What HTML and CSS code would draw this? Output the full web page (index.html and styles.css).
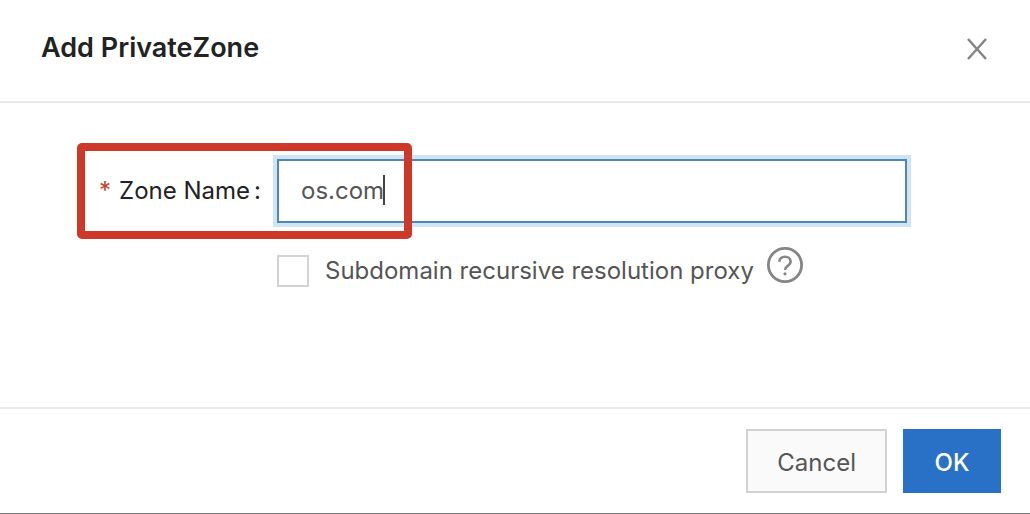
FILE: index.html
```html
<!DOCTYPE html>
<html lang="en">
<head>
<meta charset="utf-8">
<title>Add PrivateZone</title>
<link rel="stylesheet" href="styles.css">
</head>
<body>
<form class="dialog" role="dialog" aria-labelledby="dialog-title">
  <header class="dialog-header">
    <h1 class="dialog-title" id="dialog-title">Add PrivateZone</h1>
    <button class="close" type="button" aria-label="Close">
      <svg width="20" height="22" viewBox="0 0 20 22" fill="none" stroke="#858585" stroke-width="2.5"><path d="M1 1 19 21M19 1 1 21"/></svg>
    </button>
  </header>
  <main class="dialog-body">
    <div class="field">
      <label class="field-label" for="zone"><span class="required">*</span><span>Zone Name</span><span class="colon">:</span></label>
      <div class="input-wrap">
        <input class="input" id="zone" type="text" value="os.com" autocomplete="off" spellcheck="false">
        <span class="caret"></span>
      </div>
      <div class="highlight"></div>
    </div>
    <div class="option">
      <input class="checkbox" id="proxy" type="checkbox">
      <label class="option-label" for="proxy">Subdomain recursive resolution proxy</label>
      <button class="help" type="button" aria-label="Help">
        <svg width="36" height="36" viewBox="0 0 36 36" fill="none" stroke="#858585"><circle cx="18" cy="18" r="16.6" stroke-width="2.8"/><path d="M12.4 14.8C12.4 11.6 14.8 9.8 18 9.8s5.6 1.8 5.6 4.7c0 2.4-1.6 3.5-3.2 4.6-1.600 1.100-2.400 1.800-2.400 3.900" stroke-width="2.6"/><circle cx="18" cy="26.8" r="1.6" fill="#858585" stroke="none"/></svg>
      </button>
    </div>
  </main>
  <footer class="dialog-footer">
    <button class="btn" type="button">Cancel</button>
    <button class="btn btn-primary" type="submit">OK</button>
  </footer>
</form>
</body>
</html>
```
FILE: styles.css
```css
* { box-sizing: border-box; }
body {
  margin: 0;
  background: #fff;
  color: #222;
  font: 24px/32px Inter, "Liberation Sans", sans-serif;
}
.dialog {
  display: flex;
  flex-direction: column;
  min-height: 100vh;
  border-bottom: 1px solid #777;
}
.dialog-header {
  display: flex;
  justify-content: space-between;
  align-items: flex-start;
  padding: 32px 43px 37px 41px;
  border-bottom: 2px solid #e8e8e8;
}
.dialog-title {
  margin: 0;
  font-size: 27px;
  font-weight: 600;
}
.close, .help {
  display: flex;
  padding: 0;
  border: 0;
  background: none;
}
.close { margin-top: 6px; }
.dialog-body {
  flex: 1;
  padding: 56px 123px 56px 77px;
}
.field {
  position: relative;
  display: grid;
  grid-template-columns: 184px 1fr;
  column-gap: 16px;
  align-items: center;
}
.field-label {
  display: flex;
  justify-content: flex-end;
  white-space: nowrap;
}
.required {
  margin-right: 8px;
  color: #cd3b29;
}
.colon { margin-left: 4px; }
.input-wrap { position: relative; }
.input {
  display: block;
  width: 100%;
  height: 64px;
  padding: 0 22px 2px;
  border: 2px solid #4a88b8;
  border-radius: 0;
  outline: 0;
  box-shadow: 0 0 0 4px #d2e3f4;
  background: #fff;
  color: #555;
  font: inherit;
}
.caret {
  position: absolute;
  top: 16px;
  left: 106px;
  width: 2px;
  height: 30px;
  background: #444;
}
.highlight {
  position: absolute;
  top: -16px;
  left: 0;
  width: 335px;
  height: 96px;
  border: 8px solid #cd3828;
  border-radius: 5px;
  pointer-events: none;
}
.option {
  display: flex;
  align-items: center;
  margin: 32px 0 0 200px;
  color: #555;
}
.checkbox {
  appearance: none;
  flex: none;
  width: 32px;
  height: 32px;
  margin: 0 16px 0 0;
  border: 2px solid #d2d2d2;
  background: #fff;
}
.option-label { white-space: nowrap; }
.help {
  margin: -12px 0 0 13px;
}
.dialog-footer {
  display: flex;
  justify-content: flex-end;
  gap: 16px;
  padding: 20px 29px;
  border-top: 2px solid #e8e8e8;
}
.btn {
  min-width: 98px;
  height: 64px;
  padding: 3px 29px 0;
  border: 2px solid #d2d2d2;
  background: #fafafa;
  color: #555;
  font: inherit;
}
.btn-primary {
  border-color: #2970c7;
  background: #2970c7;
  color: #fff;
  font-weight: 500;
}
```
